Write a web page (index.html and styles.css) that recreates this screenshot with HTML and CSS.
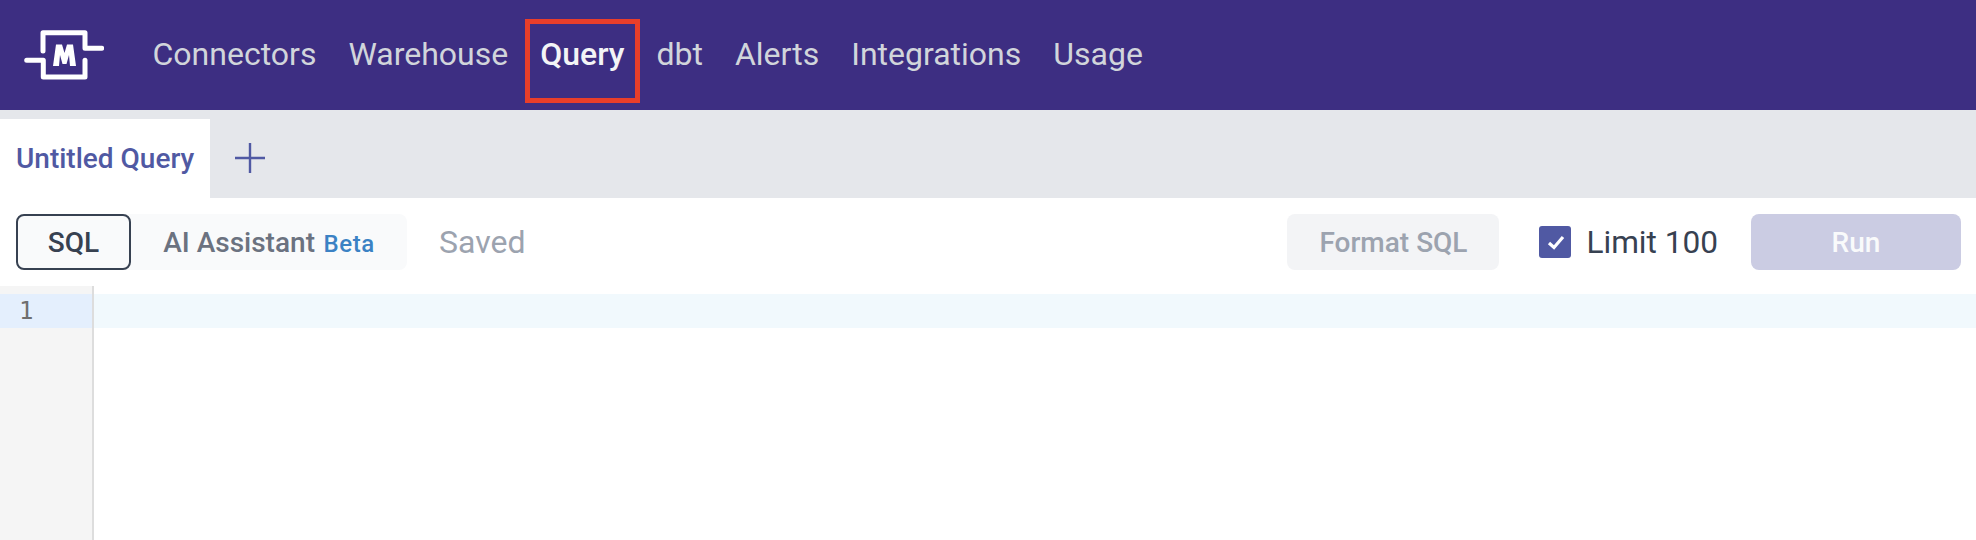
FILE: index.html
```html
<!DOCTYPE html>
<html lang="en">
<head>
<meta charset="utf-8">
<title>Query</title>
<link rel="stylesheet" href="styles.css">
</head>
<body>
<header class="topbar">
  <svg class="logo" viewBox="0 0 80 50" aria-hidden="true">
    <path d="M19 21V2.700H61V18.300H77.700M2.700 30.300H19.300V47H61V30.300" fill="none" stroke="#fff" stroke-width="5" stroke-linecap="round" stroke-linejoin="round"/>
    <path d="M29 36L32 14.500H38L40.500 23L43 14.500H49L52 36H46L45 25L42.500 34H38.500L36 25L35 36Z" fill="#fff"/>
  </svg>
  <nav class="nav">
    <a class="nav-link">Connectors</a>
    <a class="nav-link">Warehouse</a>
    <a class="nav-link active">Query</a>
    <a class="nav-link">dbt</a>
    <a class="nav-link">Alerts</a>
    <a class="nav-link">Integrations</a>
    <a class="nav-link">Usage</a>
  </nav>
</header>
<div class="tabstrip">
  <div class="tab">Untitled Query</div>
  <svg class="plus" viewBox="0 0 32 32" aria-hidden="true"><path d="M16 1V31M1 16H31" stroke="#5059a3" stroke-width="2.400"/></svg>
</div>
<div class="toolbar">
  <div class="segment">
    <button class="seg seg-on">SQL</button>
    <button class="seg seg-off">AI Assistant <span class="beta">Beta</span></button>
  </div>
  <span class="saved">Saved</span>
  <div class="spacer"></div>
  <button class="format">Format SQL</button>
  <label class="limit">
    <span class="check"><svg viewBox="0 0 32 32" aria-hidden="true"><path d="M10 17L15 21.500L24 11" fill="none" stroke="#fff" stroke-width="3.200"/></svg></span>
    Limit 100
  </label>
  <button class="run">Run</button>
</div>
<div class="editor">
  <div class="gutter"><div class="lineno">1</div></div>
  <div class="code"><div class="activeline"></div></div>
</div>
</body>
</html>
```
FILE: styles.css
```css
* { box-sizing: border-box; }
html, body { margin: 0; height: 100%; }
body { width: 1976px; height: 540px; overflow: hidden; background: #fff; font-family: Roboto, "Liberation Sans", sans-serif; display: flex; flex-direction: column; }
.topbar { height: 110px; background: #3d2e82; display: flex; align-items: center; padding-left: 24px; flex: none; }
.logo { width: 80px; height: 50px; flex: none; }
.nav { display: flex; align-items: stretch; margin-left: 32.500px; }
.nav-link { font-size: 32px; line-height: 108px; height: 110px; color: #d1d5db; padding: 0 16px; }
.nav-link.active { color: #f3f4f6; font-weight: 500; position: relative; }
.nav-link.active::after { content: ""; position: absolute; top: 19px; bottom: 7px; left: 1px; right: 0; border: 5px solid #e93e2a; }
.tabstrip { height: 88px; background: #e5e7eb; display: flex; align-items: flex-end; flex: none; }
.tab { width: 210px; height: 79px; background: #fff; color: #5059a3; font-size: 28px; font-weight: 500; line-height: 79px; padding-left: 16px; white-space: nowrap; }
.plus { width: 32px; height: 32px; margin: 0 0 24px 24px; }
.toolbar { height: 88px; display: flex; align-items: center; padding: 0 15px 0 16px; flex: none; }
.segment { display: flex; height: 56px; background: #f9fafb; border-radius: 8px; }
button { font-family: inherit; border: 0; padding: 0; }
.seg { height: 56px; background: transparent; font-size: 28px; font-weight: 500; }
.seg-on { width: 115px; border: 2px solid #374151; border-radius: 8px; color: #374151; background: #f9fafb; }
.seg-off { width: 276px; color: #6b7280; }
.beta { color: #3b82c4; font-size: 24px; margin-left: 1.500px; letter-spacing: 0.6px; }
.saved { font-size: 32px; color: #9ca3af; margin-left: 32px; }
.spacer { flex: 1; }
.format { width: 212px; height: 56px; background: #f3f4f6; border-radius: 8px; font-size: 28px; font-weight: 500; color: #9ca3af; }
.limit { display: flex; align-items: center; font-size: 31.600px; color: #374151; margin-left: 40px; gap: 15px; }
.check { width: 32px; height: 32px; border-radius: 3px; background: #5059a3; display: block; }
.check svg { display: block; width: 32px; height: 32px; }
.run { width: 210px; height: 56px; margin-left: 33px; background: #cbcce3; border-radius: 8px; color: #f9fafb; font-size: 28px; font-weight: 500; }
.editor { flex: 1; display: flex; }
.gutter { width: 94px; background: #f5f5f5; border-right: 2px solid #ddd; padding-top: 8px; flex: none; }
.lineno { height: 34px; background: #e4effd; color: #6e6e6e; font-family: "DejaVu Sans Mono", monospace; font-size: 24px; line-height: 34px; padding-left: 19px; }
.code { flex: 1; padding-top: 8px; }
.activeline { height: 34px; background: #f1f9fd; }
```
